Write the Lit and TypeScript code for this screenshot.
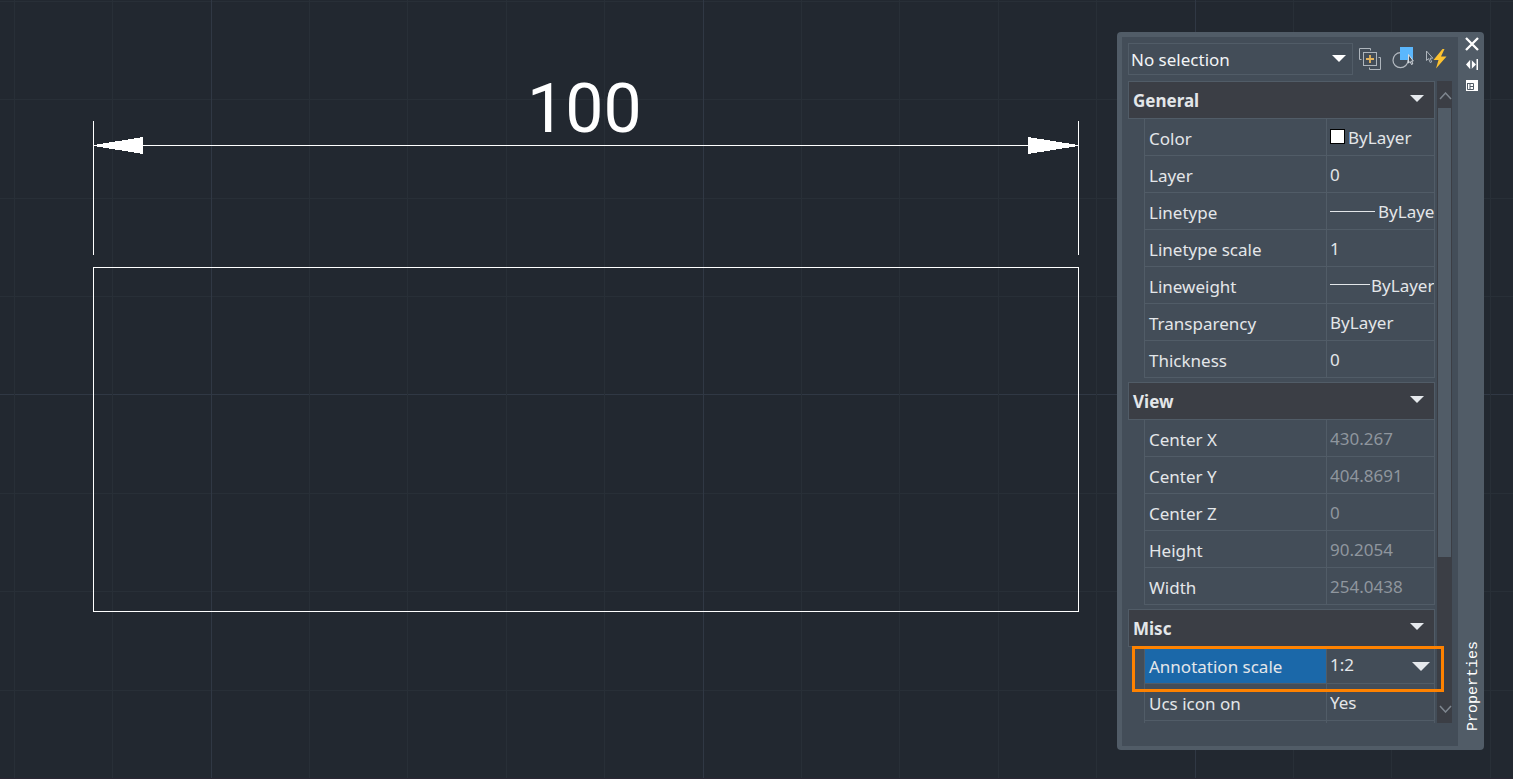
import { LitElement, html, svg, css, nothing } from "lit";
import { customElement, property, state } from "lit/decorators.js";

type Row = {
  name: string;
  value: string;
  kind?: "color" | "linetype" | "lineweight" | "list";
  readonly?: boolean;
  current?: boolean;
};
type Group = { title: string; rows: Row[]; more?: boolean };

const GROUPS: Group[] = [
  {
    title: "General",
    rows: [
      { name: "Color", value: "ByLayer", kind: "color" },
      { name: "Layer", value: "0" },
      { name: "Linetype", value: "ByLayer", kind: "linetype" },
      { name: "Linetype scale", value: "1" },
      { name: "Lineweight", value: "ByLayer", kind: "lineweight" },
      { name: "Transparency", value: "ByLayer" },
      { name: "Thickness", value: "0" },
    ],
  },
  {
    title: "View",
    rows: [
      { name: "Center X", value: "430.267", readonly: true },
      { name: "Center Y", value: "404.8691", readonly: true },
      { name: "Center Z", value: "0", readonly: true },
      { name: "Height", value: "90.2054", readonly: true },
      { name: "Width", value: "254.0438", readonly: true },
    ],
  },
  {
    title: "Misc",
    more: true,
    rows: [
      { name: "Annotation scale", value: "1:2", kind: "list", current: true },
      { name: "Ucs icon on", value: "Yes" },
    ],
  },
];

@customElement("drawing-canvas")
class DrawingCanvas extends LitElement {
  static styles = css`
    :host {
      display: block;
      box-sizing: border-box;
      height: 100%;
      border-bottom: 1px solid #2a2633;
      background: #222830;
    }
    .sheet {
      display: block;
      width: 100%;
      height: 100%;
      shape-rendering: crispEdges;
    }
    .minor {
      fill: #282f37;
    }
    .major {
      fill: #303844;
    }
    .line {
      fill: none;
      stroke: #fff;
    }
    .solid {
      fill: #fff;
    }
    .dim {
      fill: #fff;
      font: 68px Roboto, Arial, sans-serif;
    }
  `;

  // Grid lines repeat every 98.4 units; each fifth one is emphasised.
  private gridLines(vertical: boolean) {
    const start = vertical ? 14.3 : 1.3;
    const majorAt = vertical ? 2 : 4;
    const lines = Array.from({ length: 40 }, (_, i) => ({
      at: Math.floor(start + i * 98.4),
      major: i % 5 === majorAt,
    }));
    return [...lines].sort((a, b) => Number(a.major) - Number(b.major)).map((l) =>
      vertical
        ? svg`<rect class=${l.major ? "major" : "minor"} x=${l.at} y="0" width="1" height="100%"></rect>`
        : svg`<rect class=${l.major ? "major" : "minor"} x="0" y=${l.at} width="100%" height="1"></rect>`
    );
  }

  render() {
    return html`<svg class="sheet" role="img" aria-label="Dimensioned rectangle">
      ${this.gridLines(false)} ${this.gridLines(true)}
      <path class="line" d="M93.5 121V255M1078.5 121V255M93 145.500H1079M93.500 267.500H1078.500V611.500H93.500Z" />
      <path class="solid" d="M94 145V146L143 154V137ZM1078 145V146L1028 154V137Z" />
      <text class="dim" x="527" y="132">100</text>
    </svg>`;
  }
}

@customElement("property-group")
class PropertyGroup extends LitElement {
  @property({ attribute: false }) group!: Group;
  @state() private open = true;

  static styles = css`
    :host {
      display: block;
      color: #e3e6e9;
      font: 17px/24px "Noto Sans", "Open Sans", sans-serif;
    }
    .head {
      display: flex;
      align-items: center;
      justify-content: space-between;
      box-sizing: border-box;
      width: 100%;
      height: 38px;
      padding: 2px 10px 0 4px;
      border: 1px solid #515c67;
      background: #3b3e45;
      color: inherit;
      font: inherit;
      font-weight: 700;
      text-align: left;
    }
    .arrow {
      display: block;
      margin-bottom: 6px;
      fill: #e6e9ed;
    }
    .body {
      padding-left: 16px;
    }
    .grid {
      width: 100%;
      table-layout: fixed;
      border-collapse: separate;
      border-spacing: 0;
    }
    .row {
      position: relative;
    }
    .name,
    .value {
      box-sizing: border-box;
      height: 37px;
      padding: 0;
      border: 0 solid #515c67;
      border-width: 0 0 1px 1px;
      text-align: left;
      font-weight: 400;
    }
    .name {
      padding: 4px 0 0 4px;
      width: 182px;
    }
    .value {
      border-right-width: 1px;
    }
    .stub .name,
    .stub .value {
      height: 2px;
      padding: 0;
      border-bottom: 0;
    }
    .current .name {
      background: #1b68a9;
    }
    .cell {
      display: flex;
      align-items: center;
      height: 36px;
      padding-left: 3px;
      overflow: hidden;
    }
    .field {
      flex: 1;
      min-width: 0;
      height: 36px;
      padding: 0;
      border: 0;
      outline: 0;
      background: none;
      color: inherit;
      font: inherit;
      appearance: none;
    }
    .readonly .field {
      color: #8f969e;
    }
    .swatch {
      flex: none;
      box-sizing: border-box;
      width: 15px;
      height: 15px;
      margin: 0 3px 2px 0;
      border: 1px solid #000;
      background: #fff;
    }
    .sample {
      flex: none;
      width: 45px;
      height: 1px;
      margin-right: 3px;
      background: #e3e6e9;
    }
    .sample.thin {
      width: 40px;
      margin: 0 1px 2px 0;
    }
    .cell .arrow {
      flex: none;
      margin: 2px 4px 0 0;
      pointer-events: none;
    }
    .callout {
      position: absolute;
      z-index: 2;
      inset: -1px -9px -8px -12px;
      border: 3px solid #ff8200;
      pointer-events: none;
    }
  `;

  private cell(row: Row, id: string) {
    if (row.kind === "list") {
      return html`<select class="field" id=${id}>
          <option>${row.value}</option>
        </select>
        <svg class="arrow" width="18" height="9" viewBox="0 0 18 9"><path d="M0 0H18L9 9Z" /></svg>`;
    }
    const lead =
      row.kind === "color"
        ? html`<span class="swatch"></span>`
        : row.kind === "linetype"
          ? html`<span class="sample"></span>`
          : row.kind === "lineweight"
            ? html`<span class="sample thin"></span>`
            : nothing;
    return html`${lead}<input class="field" id=${id} .value=${row.value} ?readonly=${row.readonly} />`;
  }

  render() {
    const { title, rows, more } = this.group;
    return html`
      <button class="head" aria-expanded=${this.open} @click=${() => (this.open = !this.open)}>
        ${title}
        <svg class="arrow" width="14" height="7" viewBox="0 0 14 7"><path d="M0 0H14L7 7Z" /></svg>
      </button>
      ${this.open
        ? html`<div class="body">
            <table class="grid">
              ${rows.map((row, i) => {
                const id = `field-${i}`;
                return html`<tr class="row ${row.current ? "current" : ""} ${row.readonly ? "readonly" : ""}">
                  <th class="name" scope="row">
                    <label for=${id}>${row.name}</label>
                    ${row.current ? html`<span class="callout"></span>` : nothing}
                  </th>
                  <td class="value"><div class="cell">${this.cell(row, id)}</div></td>
                </tr>`;
              })}
              ${more ? html`<tr class="stub"><td class="name"></td><td class="value"></td></tr>` : nothing}
            </table>
          </div>`
        : nothing}
    `;
  }
}

@customElement("properties-palette")
class PropertiesPalette extends LitElement {
  static styles = css`
    :host {
      display: flex;
      box-sizing: border-box;
      width: 367px;
      padding-left: 5px;
      border-radius: 4px;
      background: #515c67;
      color: #f2f4f6;
      font: 17px/24px "Noto Sans", "Open Sans", sans-serif;
    }
    .main {
      flex: 1;
      min-width: 0;
      margin: 5px 0 4px;
      padding: 6px 6px 23px;
      background: #434d58;
    }
    .toolbar {
      display: flex;
      align-items: center;
      gap: 9px;
      margin-bottom: 6px;
      padding-right: 4px;
    }
    .combo {
      display: flex;
      flex: 1;
      align-items: center;
      box-sizing: border-box;
      height: 32px;
      margin-right: -4px;
      border: 1px solid #515c67;
    }
    .pick {
      flex: 1;
      min-width: 0;
      height: 30px;
      padding: 1px 0 0 2px;
      border: 0;
      outline: 0;
      background: none;
      color: inherit;
      font: inherit;
      appearance: none;
    }
    .arrow {
      flex: none;
      margin: 0 6px 1px 0;
      fill: #fff;
      pointer-events: none;
    }
    .tool {
      display: block;
      padding: 0;
      border: 0;
      background: none;
      color: inherit;
    }
    .glyph {
      display: block;
    }
    .scroller {
      display: flex;
      gap: 2px;
    }
    .groups {
      display: flex;
      flex: 1;
      flex-direction: column;
      gap: 4px;
      min-width: 0;
    }
    .bar {
      display: flex;
      flex-direction: column;
      width: 15px;
      background: #3b3e45;
    }
    .step {
      display: flex;
      align-items: center;
      justify-content: center;
      height: 27px;
      padding: 2px 0 0 1px;
      border: 0;
      background: none;
    }
    .step.down {
      padding: 0 0 2px 1px;
    }
    .track {
      display: grid;
      flex: 1;
      grid-template-rows: 55fr 17fr;
      padding: 0 1px;
    }
    .thumb {
      background: #515c67;
    }
    .caption {
      display: flex;
      flex-direction: column;
      align-items: center;
      width: 26px;
      padding-bottom: 19px;
      box-sizing: border-box;
    }
    .caption .tool {
      height: 21px;
      margin-left: 2px;
    }
    .title {
      margin: auto 0 0 6px;
      writing-mode: vertical-rl;
      transform: rotate(180deg);
      font: 15px/20px "Liberation Mono", "Courier New", monospace;
      color: #fff;
    }
  `;

  render() {
    return html`
      <div class="main">
        <div class="toolbar">
          <div class="combo">
            <select class="pick" aria-label="Selection">
              <option>No selection</option>
            </select>
            <svg class="arrow" width="14" height="7" viewBox="0 0 14 7"><path d="M0 0H14L7 7Z" /></svg>
          </div>
          <button class="tool" aria-label="Toggle PICKADD">
            <svg class="glyph" width="24" height="24" viewBox="0 0 24 24" fill="none" stroke="#aeb5bc">
              <path d="M3.500 12.500H1.500V1.500H12.500V3.500M20.500 10.500H22.500V22.500H11.500V20.500" />
              <rect x="5.500" y="5.500" width="13" height="13" />
              <path d="M12 8V16M8 12H16" stroke="#e3b35c" stroke-width="1.800" />
            </svg>
          </button>
          <button class="tool" aria-label="Select objects">
            <svg class="glyph" width="24" height="24" viewBox="0 0 24 24">
              <circle cx="9.500" cy="13.200" r="7.500" fill="none" stroke="#b4bac1" stroke-width="1.200" />
              <path d="M9 0H22V13H9Z" fill="#5bb7fd" />
              <path d="M17.500 7.500V16L19.200 14.500L20.500 17.500L21.800 16.900L20.600 14H22.300Z" fill="#434d58" stroke="#d5dadf" />
            </svg>
          </button>
          <button class="tool" aria-label="Quick select">
            <svg class="glyph" width="24" height="24" viewBox="0 0 24 24">
              <path d="M2.500 4V13.500L4.600 11.600L6.200 15.500L7.700 14.900L6.100 11.200H8.800Z" fill="#434d58" stroke="#aeb5bc" />
              <path d="M18.500 2L9.500 13H14.500L12 21.500L22.500 9.500H17L20.500 2Z" fill="#fdc22f" />
            </svg>
          </button>
        </div>
        <div class="scroller">
          <div class="groups">${GROUPS.map((g) => html`<property-group .group=${g}></property-group>`)}</div>
          <div class="bar">
            <button class="step" aria-label="Scroll up">
              <svg width="13" height="8" viewBox="0 0 13 8" fill="none" stroke="#7e868f" stroke-width="1.500"><path d="M1 7L6.500 1L12 7" /></svg>
            </button>
            <div class="track"><div class="thumb"></div></div>
            <button class="step down" aria-label="Scroll down">
              <svg width="13" height="8" viewBox="0 0 13 8" fill="none" stroke="#7e868f" stroke-width="1.500"><path d="M1 1L6.500 7L12 1" /></svg>
            </button>
          </div>
        </div>
      </div>
      <div class="caption">
        <button class="tool" aria-label="Close">
          <svg class="glyph" width="14" height="20" viewBox="0 -3 14 20"><path d="M1 2L13 14M13 2L1 14" stroke="#fff" stroke-width="2.300" /></svg>
        </button>
        <button class="tool" aria-label="Auto-hide">
          <svg class="glyph" width="14" height="20" viewBox="0 -3 14 20" fill="#fff">
            <path d="M1 7.500L5 3V12ZM11 7.500L7 3.500V11.500ZM11.500 2H13V13H11.500Z" />
            <path d="M5.500 3H6.500V12H5.500Z" fill="#8d959d" />
          </svg>
        </button>
        <button class="tool" aria-label="Palette menu">
          <svg class="glyph" width="14" height="20" viewBox="0 -3 14 20">
            <path d="M1 2H13V13H1Z" fill="#fff" />
            <path d="M2 5.500H8.500V11.500H2.500V5.500M5 5.500V11.500M5 8.500H8.500" fill="none" stroke="#515c67" />
          </svg>
        </button>
        <span class="title">Properties</span>
      </div>
    `;
  }
}

@customElement("app-root")
class AppRoot extends LitElement {
  static styles = css`
    :host {
      display: block;
      position: relative;
      height: 100vh;
      overflow: hidden;
    }
    .palette {
      position: absolute;
      top: 32px;
      right: 29px;
    }
  `;

  render() {
    return html`<drawing-canvas></drawing-canvas>
      <properties-palette class="palette"></properties-palette>`;
  }
}
